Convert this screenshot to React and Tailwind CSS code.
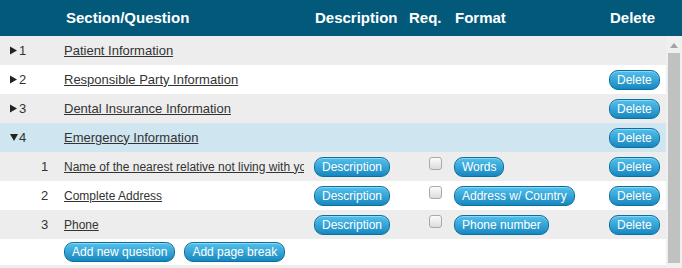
import React from "react";

const btn =
  "inline-flex items-center h-[20px] px-[7px] rounded-[9px] border border-[#0b6f9f] bg-gradient-to-b from-[#52c1ec] to-[#1488c0] text-white text-[12px] leading-none whitespace-nowrap shadow-[inset_0_1px_0_rgba(255,255,255,0.35)]";

function Btn({ children }) {
  return <span className={btn}>{children}</span>;
}

function Arrow({ down }) {
  return (
    <svg width="8" height="9" viewBox="0 0 8 9" className="mr-[1px]">
      {down ? (
        <polygon points="0,1 8,1 4,8" fill="#222" />
      ) : (
        <polygon points="0,0.5 7,4.5 0,8.5" fill="#222" />
      )}
    </svg>
  );
}

function Check() {
  return (
    <span className="inline-block w-[13px] h-[13px] rounded-[3px] border border-[#a9a9a9] bg-gradient-to-b from-[#fcfcfc] to-[#dcdcdc]" />
  );
}

function Row({ bg, toggle, label, small, desc, req, format, del }) {
  return (
    <div className={`flex items-center h-[29px] ${bg}`}>
      <div className="w-[64px] shrink-0 flex items-center text-[13px] text-[#333]">{toggle}</div>
      <div
        className={`w-[240px] mr-[6px] shrink-0 overflow-hidden whitespace-nowrap text-[#333] underline ${
          small ? "text-[12px]" : "text-[13px]"
        }`}
      >
        {label}
      </div>
      <div className="w-[90px] shrink-0 pl-[4px] pb-[1px]">{desc && <Btn>Description</Btn>}</div>
      <div className="w-[50px] shrink-0 flex pl-[29px] pb-[6px]">{req && <Check />}</div>
      <div className="w-[150px] shrink-0 pl-[4px] pb-[1px]">{format && <Btn>{format}</Btn>}</div>
      <div className="flex-1 pl-[9px] pb-[1px]">{del && <Btn>Delete</Btn>}</div>
    </div>
  );
}

export default function App() {
  const sec = (n, down) => (
    <div className="flex items-center pl-[10px]">
      <Arrow down={down} />
      <span>{n}</span>
    </div>
  );
  const q = (n) => <span className="pl-[41px]">{n}</span>;
  return (
    <div
      className="w-[682px] h-[268px] overflow-hidden bg-white"
      style={{ fontFamily: '"Liberation Sans", Arial, sans-serif' }}
    >
      <div className="flex items-center h-[36px] bg-[#03597a] text-white font-bold text-[15px] pt-[1px]">
        <div className="w-[66px] shrink-0" />
        <div className="w-[249px] shrink-0">Section/Question</div>
        <div className="w-[94px] shrink-0">Description</div>
        <div className="w-[46px] shrink-0">Req.</div>
        <div className="w-[155px] shrink-0">Format</div>
        <div>Delete</div>
      </div>
      <div className="flex">
        <div className="w-[666px] shrink-0">
          <Row bg="bg-[#ededed]" toggle={sec(1)} label="Patient Information" />
          <Row bg="bg-white" toggle={sec(2)} label="Responsible Party Information" del />
          <Row bg="bg-[#ededed]" toggle={sec(3)} label="Dental Insurance Information" del />
          <Row bg="bg-[#cfe6f0]" toggle={sec(4, true)} label="Emergency Information" del />
          <Row
            bg="bg-[#ededed]"
            toggle={q(1)}
            label="Name of the nearest relative not living with you"
            small
            desc
            req
            format="Words"
            del
          />
          <Row bg="bg-white" toggle={q(2)} label="Complete Address" small desc req format="Address w/ Country" del />
          <Row bg="bg-[#ededed]" toggle={q(3)} label="Phone" small desc req format="Phone number" del />
          <div className="flex items-center h-[26px] bg-white pl-[64px] gap-[9px] pb-[1px]">
            <Btn>Add new question</Btn>
            <Btn>Add page break</Btn>
          </div>
          <div className="h-[10px] bg-[#ededed]" />
        </div>
        <div className="w-[16px] shrink-0 bg-[#f0f0f0] flex flex-col items-center h-[232px]">
          <svg width="8" height="5" viewBox="0 0 8 5" className="mt-[7px]">
            <polygon points="4,0 8,5 0,5" fill="#a3a3a3" />
          </svg>
          <div className="mt-[5px] w-[12px] h-[210px] bg-[#c1c1c1]" />
        </div>
      </div>
    </div>
  );
}
